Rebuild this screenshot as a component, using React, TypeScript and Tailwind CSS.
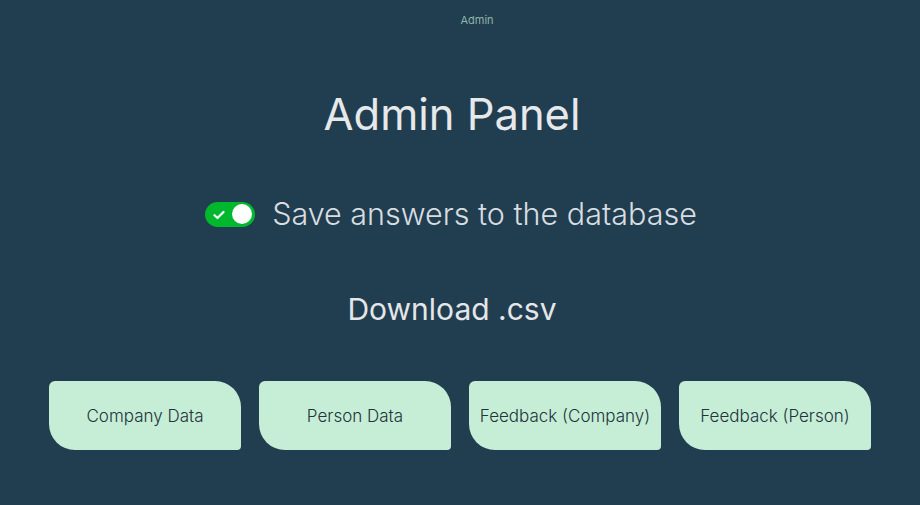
import React from "react";

const F = { fontFamily: "Inter, Roboto, 'Liberation Sans', sans-serif" };

function Toggle() {
  return (
    <div className="relative w-[50px] h-[25px] rounded-full bg-[#00b82e]">
      <svg className="absolute left-[8px] top-[8px]" width="12" height="10" viewBox="0 0 12 10">
        <path d="M1.5 5.2 L4.5 8 L10.5 2" stroke="white" strokeWidth="2.2" fill="none" strokeLinecap="round" strokeLinejoin="round" />
      </svg>
      <div className="absolute right-[3px] top-[2.5px] w-[20px] h-[20px] rounded-full bg-white" />
    </div>
  );
}

export default function App() {
  const buttons = ["Company Data", "Person Data", "Feedback (Company)", "Feedback (Person)"];
  return (
    <div className="w-[920px] h-[505px] bg-[#213d50] flex flex-col items-center" style={F}>
      <div className="mt-[13px] h-[14px] text-[11px] leading-[14px] text-[#8bb5a6] pl-[34px]">Admin</div>
      <h1 className="mt-[62px] pr-[16px] text-[43.5px] leading-[50px] font-normal text-[#e6e8ea]">Admin Panel</h1>
      <div className="mt-[57px] pr-[18px] flex items-center gap-[17px] h-[36px]">
        <Toggle />
        <span className="text-[30.5px] leading-[36px] font-light text-[#d8dde0]">Save answers to the database</span>
      </div>
      <div className="mt-[59px] pr-[16px] text-[30px] leading-[36px] text-[#e4e6e8]">Download .csv</div>
      <div className="mt-[54px] flex gap-[18px]">
        {buttons.map((b) => (
          <button
            key={b}
            className="w-[192px] h-[69px] pt-[3px] bg-[#c6eed6] text-[17px] font-light text-[#22343c] rounded-tl-[6px] rounded-tr-[26px] rounded-bl-[26px] rounded-br-[4px] flex items-center justify-center"
          >
            {b}
          </button>
        ))}
      </div>
    </div>
  );
}
